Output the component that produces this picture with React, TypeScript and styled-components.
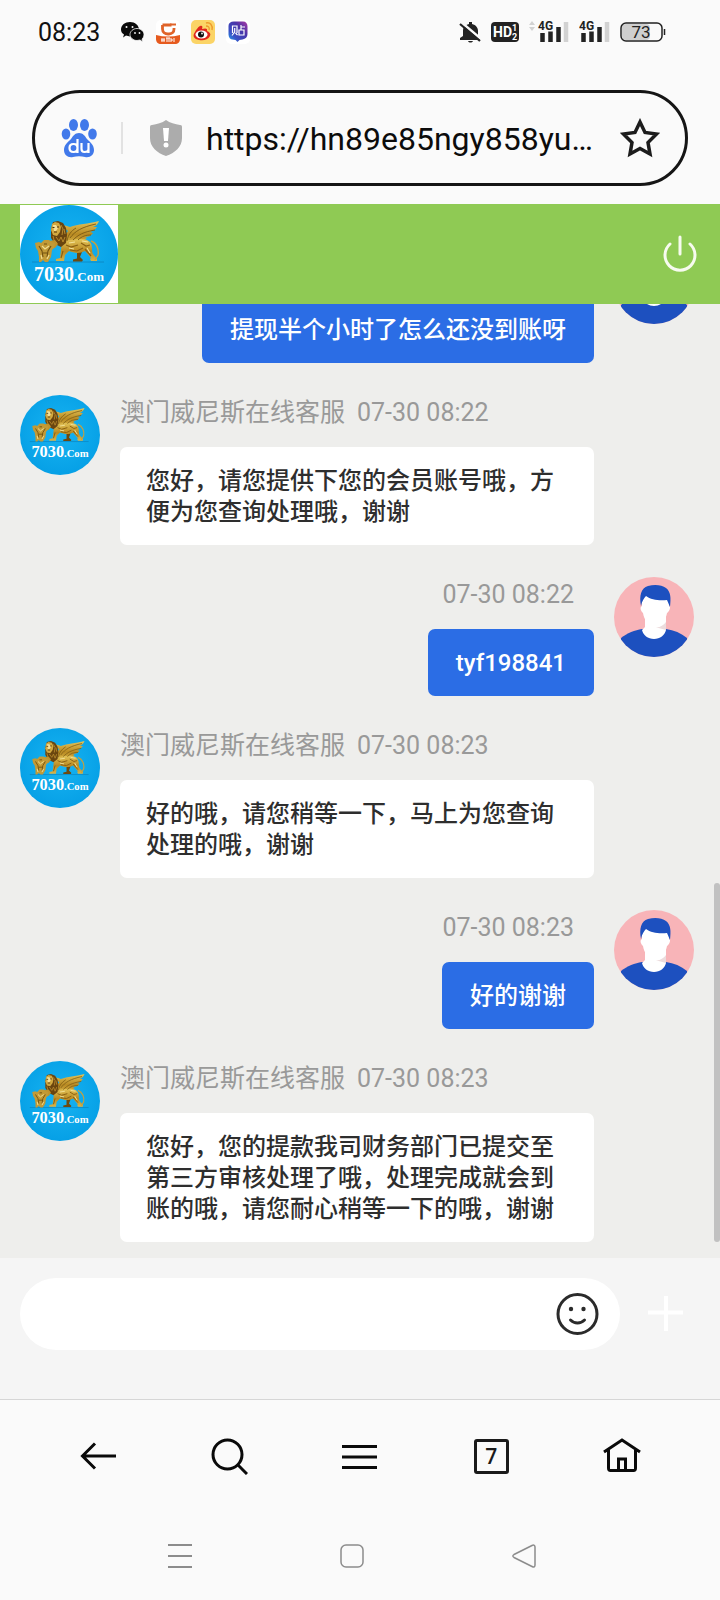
import React from "react";
import styled, { createGlobalStyle } from "styled-components";

const GlobalStyle = createGlobalStyle`
  *, *::before, *::after { box-sizing: border-box; }
  html, body, #root { height: 100%; }
  body {
    margin: 0;
    background: #fafafa;
    font-family: Roboto, "Noto Sans CJK SC", sans-serif;
  }
  button, input { font: inherit; }
  svg { display: block; flex: none; }
`;

const Screen = styled.div`
  display: flex;
  flex-direction: column;
  height: 100vh;
  background: #fafafa;
`;

const StatusBar = styled.div`
  display: flex;
  flex: none;
  align-items: center;
  justify-content: space-between;
  height: 64px;
  padding: 0 54px 0 38px;
`;

const StatusGroup = styled.div<{ $gap: number }>`
  display: flex;
  align-items: center;
  gap: ${(p) => p.$gap}px;
`;

const Clock = styled.time`
  margin-right: 10px;
  padding-top: 2px;
  font-size: 25px;
  line-height: 32px;
  color: #111;
`;

const AddressBar = styled.div`
  display: flex;
  flex: none;
  align-items: center;
  height: 96px;
  margin: 26px 32px 18px;
  padding: 0 25px 0 26px;
  border: 3px solid #151515;
  border-radius: 48px;
`;

const Divider = styled.span`
  width: 2px;
  height: 32px;
  margin: 0 26px 0 24px;
  background: #e2e2e2;
`;

const AddressInput = styled.input`
  flex: 1;
  min-width: 0;
  margin: 0 20px 0 23px;
  padding: 2px 0 0;
  border: 0;
  outline: 0;
  background: none;
  color: #0c0c0c;
  font-size: 32px;
  line-height: 40px;
  text-overflow: ellipsis;
`;

const IconButton = styled.button`
  display: flex;
  flex: none;
  align-items: center;
  justify-content: center;
  padding: 0;
  border: 0;
  background: none;
  color: inherit;
  cursor: pointer;
`;

const Header = styled.header`
  display: flex;
  flex: none;
  align-items: center;
  justify-content: space-between;
  height: 100px;
  padding: 0 20px;
  background: #8fca54;
`;

const LogoPlate = styled.div`
  background: #fff;
`;

const Chat = styled.main`
  position: relative;
  display: flex;
  flex: 1;
  flex-direction: column;
  justify-content: flex-end;
  min-height: 0;
  overflow: hidden;
  background: #eeeeec;
`;

const MessageList = styled.ol`
  display: flex;
  flex: none;
  flex-direction: column;
  gap: 32px;
  margin: 0;
  padding: 0 26px 16px 20px;
  list-style: none;
`;

const MessageRow = styled.li<{ $mine: boolean }>`
  display: flex;
  flex-direction: ${(p) => (p.$mine ? "row-reverse" : "row")};
  align-items: flex-start;
  gap: 20px;
  padding: ${(p) => (p.$mine ? "0 0 0 100px" : "0 100px 0 0")};
`;

const MessageBody = styled.div<{ $mine: boolean }>`
  display: flex;
  flex: 1;
  flex-direction: column;
  align-items: ${(p) => (p.$mine ? "flex-end" : "flex-start")};
  min-width: 0;
`;

const Meta = styled.div<{ $mine: boolean }>`
  display: flex;
  gap: 12px;
  min-height: 36px;
  margin-bottom: 16px;
  padding-right: ${(p) => (p.$mine ? "20px" : "0")};
  color: #999;
  font-size: 25px;
  line-height: 36px;
  white-space: nowrap;
`;

const Bubble = styled.p<{ $mine: boolean }>`
  margin: 0;
  padding: ${(p) => (p.$mine ? "19px 28px 17px" : "19px 26px 17px")};
  border-radius: 7px;
  background: ${(p) => (p.$mine ? "#2b6de5" : "#fff")};
  color: ${(p) => (p.$mine ? "#fff" : "#2e2e2e")};
  font-size: 24px;
  font-weight: 500;
  line-height: 31px;
`;

const ScrollThumb = styled.div`
  position: absolute;
  right: 0;
  bottom: 16px;
  width: 6px;
  height: 359px;
  border-radius: 3px;
  background: #c1c1c1;
`;

const Composer = styled.form`
  display: flex;
  flex: none;
  align-items: center;
  gap: 27px;
  padding: 20px 36px 49px 20px;
  border-bottom: 1px solid #d6d6d6;
  background: #f5f5f5;
`;

const MessageField = styled.div`
  display: flex;
  flex: 1;
  align-items: center;
  height: 72px;
  padding: 0 20px 0 28px;
  border-radius: 36px;
  background: #fff;
`;

const MessageInput = styled.input`
  flex: 1;
  min-width: 0;
  height: 100%;
  padding: 0;
  border: 0;
  outline: 0;
  background: none;
  color: #2e2e2e;
  font-size: 24px;
`;

const BrowserBar = styled.nav`
  display: flex;
  flex: none;
  height: 112px;
  padding: 0 32px;
  color: #0a0a0a;
`;

const SystemBar = styled.nav`
  display: flex;
  flex: none;
  height: 88px;
  padding: 0 110px 0 94px;
  color: #8c8c8c;
`;

const BarButton = styled(IconButton)`
  flex: 1;
`;

const TabCount = styled.span`
  display: flex;
  align-items: center;
  justify-content: center;
  width: 35px;
  height: 35px;
  border: 3px solid #1a1a1a;
  border-radius: 3px;
  color: #1a1a1a;
  font-family: "Open Sans", sans-serif;
  font-size: 21px;
  font-weight: 600;
  line-height: 28px;
`;

function LionLogo({ size }: { size: number }) {
  return (
    <svg width={size} height={size} viewBox="0 0 98 98" role="img" aria-label="7030.Com">
      <defs>
        <radialGradient id={`sky${size}`} cx="50%" cy="45%" r="55%">
          <stop offset="0" stopColor="#18b4f2" />
          <stop offset="1" stopColor="#06a0e6" />
        </radialGradient>
        <linearGradient id={`gold${size}`} x1="0" y1="0" x2="0" y2="1">
          <stop offset="0" stopColor="#e3c458" />
          <stop offset="0.55" stopColor="#b98a22" />
          <stop offset="1" stopColor="#d9b549" />
        </linearGradient>
      </defs>
      <circle cx="49" cy="49" r="49" fill={`url(#sky${size})`} />
      <path d="M12 57h72" stroke="#0b84bf" strokeWidth="0.8" />
      <path d="M57 46l5 1-2 5 3 3-1 1.500h-9l0-2 4-1z" fill="#6d4a10" />
      <g fill={`url(#gold${size})`}>
        <path d="M44 35c1-3 2-7 4-9l-6-5c2-1 5 0 8 1 8-3 18-3 29-6-1 3-3 5-6 6l4 0c-2 3-4 4-7 5l3 1c-2 3-5 4-8 4l2 1c-3 3-7 3-10 3-3 0-5 2-8 4z" />
        <path d="M42 35c6 1 12-1 18-1 8 0 12 3 12 9 0 3 0 4 1 6l4 5 0 2h-6l-1-2 1-1-6-7c-6 3-11 2-16 0l-4 4-1 6h-8l0-2 4-1 1-8z" />
      </g>
      <path d="M71 36c6 2 8 9 7 14l-3 5" fill="none" stroke="#c9a03a" strokeWidth="1.400" />
      <path d="M33 17l5-1 5 2 3 5 1 7-1 8-5 4-6-3-4-6 0-9z" fill="#6a450f" />
      <path d="M32 19l3-2 4 1 2 4-1 5-3 4-4-1-2-5z" fill="#d2a940" />
      <path d="M33 20l3 0 2 3-2 3-2 0z" fill="#f3e09a" />
      <path d="M32.500 22.500h2M37 22h2M34 27h3" stroke="#4b300a" strokeWidth="1" />
      <path d="M41 20l2 4-1 6M36 32l3 4 2-4 2 5 2-5M44 24l1 5M33 31l1 4 3 3" fill="none" stroke="#b98a2c" strokeWidth="1" />
      <path d="M29 36l6-1 3 4-3 4-5-1z" fill="#c0932c" />
      <path d="M15 38l4-1 2 1 3-3 5 0 3 2 3 1-1 5-2 2-1 7-3 5h-3l-2-2-2 2-2 0 0-5-1-6-2-3z" fill="#c29a36" />
      <path d="M50 33c5-7 12-11 26-14M53 35c5-5 10-8 22-10M58 35c4-4 8-5 13-5M47 36c1-6 4-10 9-13" stroke="#7b5a14" strokeWidth="0.900" fill="none" />
      <path d="M46 40l5 2 7-2M61 38l5 3 4-1M50 45l7 1 6-3M65 44l6 7M43 46l-2 7" stroke="#8a6012" strokeWidth="1.200" fill="none" />
      <path d="M49 38l6-1M62 36l6 1M49 43l5 1M67 43l3 5" stroke="#f4e39a" strokeWidth="1.100" fill="none" />
      <path d="M19 41l3 5 1 6M31 41l-3 5-1 6M24 39l3 0M23 48h5" stroke="#71500f" strokeWidth="1.100" fill="none" />
      <path d="M22 41l3 3 4-3M21 50l1 4M29 50l-2 4" stroke="#f0dc90" strokeWidth="1.200" fill="none" />
      <text x="14" y="76" fill="#fff" fontFamily="Liberation Serif, serif" fontWeight="700" fontSize="20">
        7030<tspan fontSize="13">.Com</tspan>
      </text>
    </svg>
  );
}

function UserAvatar() {
  return (
    <svg width="80" height="80" viewBox="0 0 80 80" role="img" aria-label="用户">
      <clipPath id="userClip"><circle cx="40" cy="40" r="40" /></clipPath>
      <g clipPath="url(#userClip)">
        <path d="M0 0h80v80H0z" fill="#f8b4b8" />
        <path d="M7 61c6-5 14-8 21-9l24 0c8 1 15 4 21 9v19H7z" fill="#1d50bf" />
        <path d="M31 40h21v13c-1 5-6 9-12 9s-11-4-12-9l3-3z" fill="#fff" />
        <path d="M52 45c-3 4-7 6-11 5l11 3z" fill="#ecdcdd" />
        <path d="M28 18h27l0 11c2 0 1 5-2 7-1 6-5 12-12 13-7-1-11-6-12-13-3-3-3-6-1-7z" fill="#fff" />
        <path d="M27 29c-2-10 0-18 7-20 7-2 14-1 18 2 5 4 5 10 4 19l-3-7c-7 1-16 0-21-4-2 2-4 5-5 10z" fill="#1d50bf" />
      </g>
    </svg>
  );
}

function WeChatIcon() {
  return (
    <svg width="24" height="24" viewBox="0 0 24 24" aria-hidden="true">
      <path d="M9 2C4 2 0 5 0 9.500c0 2 1 4 3 5l-1 3 3-2 4 1c5 0 9-3 9-7S14 2 9 2z" fill="#0a0a0a" />
      <path d="M16 8.500c-4 0-7 3-7 6s3 6 7 6l3-.5 3 2-1-3c1-1 2-2 2-4.500 0-3-3-6-7-6z" fill="#0a0a0a" stroke="#fafafa" strokeWidth="0.800" />
      <g fill="#fafafa"><circle cx="5.500" cy="7" r="1" /><circle cx="11.500" cy="7" r="1" /><circle cx="14" cy="13" r="0.900" /><circle cx="18.500" cy="13" r="0.900" /></g>
    </svg>
  );
}

function DeliveryIcon() {
  return (
    <svg width="24" height="24" viewBox="0 0 24 24" aria-hidden="true">
      <rect width="24" height="24" rx="5" fill="#fff" />
      <path d="M6.500 5h9M18 8v1c0 3-2 5-5 5h-1c-3 0-5.500-2-5.500-5V5" fill="none" stroke="#e0642a" strokeWidth="2.800" />
      <path d="M14 4.500h6" fill="none" stroke="#e0642a" strokeWidth="2" />
      <path d="M0 15c8 2 16 2 24 0v4c0 3-2 5-5 5H5c-3 0-5-2-5-5z" fill="#e65a1e" />
      <path d="M6 18v4M8 18v4M11 18v4M13 18v4M15 18v4M18 18v4M5 20h4M10 18h4M15 20h2" stroke="#fff" strokeWidth="1" />
    </svg>
  );
}

function WeiboIcon() {
  return (
    <svg width="24" height="24" viewBox="0 0 24 24" aria-hidden="true">
      <rect width="24" height="24" rx="5" fill="#fbd466" />
      <path d="M9 6c2-1 3 0 2 3 3-1 6-1 5 2 3 1 4 3 3 5-2 4-7 5-11 4-5-1-7-4-4-8 1-2 3-5 5-6z" fill="#e0261c" />
      <ellipse cx="10.500" cy="14.500" rx="6" ry="4" fill="#fff" />
      <circle cx="10" cy="14.500" r="3" fill="#111" />
      <circle cx="11" cy="13.500" r="0.900" fill="#fff" />
      <path d="M15 3c4-1 7 2 6 7M15 6c2 0 4 1 3 4" fill="none" stroke="#ee9a2b" strokeWidth="1.400" />
    </svg>
  );
}

function TiebaIcon() {
  return (
    <svg width="24" height="24" viewBox="0 0 24 24" aria-hidden="true">
      <defs>
        <linearGradient id="tieba" x1="1" y1="0" x2="0" y2="1">
          <stop offset="0" stopColor="#b03aa6" />
          <stop offset="0.350" stopColor="#4a35a8" />
          <stop offset="0.700" stopColor="#3a4fc4" />
          <stop offset="1" stopColor="#23a6ef" />
        </linearGradient>
      </defs>
      <rect width="24" height="24" rx="5" fill="#fff" />
      <path d="M8 1.500h9c3 0 4.500 2 4.500 5V14c0 3-2 5-5 5.500l-3 .5-2 2-2-2-3-.500c-2 0-4-2-4-5V6c0-3 2-4.500 5.500-4.500z" fill="url(#tieba)" />
      <path d="M6.500 13V6h4.500v7M8.700 8v4L6 15.500M9.500 13l2 2M15 5v5M15 7h4M13 10h5v5h-5z" fill="none" stroke="#fff" strokeWidth="1.200" />
    </svg>
  );
}

function BellOffIcon() {
  return (
    <svg width="22" height="24" viewBox="0 0 22 24" aria-hidden="true">
      <path d="M10 2h3v2c4 1 6 4 6 7v5l2 2v2H1v-2l3-2v-5c0-4 2-6 6-7zM9 21h5c-1 2-4 2-5 0z" fill="#222" />
      <path d="M2 2l20 17" stroke="#fafafa" strokeWidth="2.500" />
      <path d="M1 4l20 17" stroke="#222" strokeWidth="2.200" />
    </svg>
  );
}

function HdBadge() {
  return (
    <svg width="28" height="20" viewBox="0 0 28 20" aria-label="HD 1 2">
      <rect width="28" height="20" rx="4" fill="#222" />
      <text x="2" y="15" fontFamily="Roboto, sans-serif" fontWeight="700" fontSize="14" fill="#fff">HD</text>
      <text x="21" y="9" fontFamily="Roboto, sans-serif" fontWeight="700" fontSize="9" fill="#fff">1</text>
      <text x="21" y="18" fontFamily="Roboto, sans-serif" fontWeight="700" fontSize="9" fill="#fff">2</text>
    </svg>
  );
}

function SignalIcon({ traffic }: { traffic?: boolean }) {
  return (
    <svg width={traffic ? 40 : 31} height="24" viewBox={traffic ? "-9 0 40 24" : "0 0 31 24"} aria-label="4G">
      {traffic && <path d="M-9 5l3-4 3 4zM-9 7l3 4 3-4z" fill="#d2d2d2" />}
      <text x="0" y="10" fontFamily="Roboto, sans-serif" fontWeight="700" fontSize="12" fill="#222">4G</text>
      <path d="M4.500 13v9M12.500 11.500v10.500M20.500 7v15" stroke="#222" strokeWidth="4.500" />
      <path d="M28 2v20" stroke="#d2d2d2" strokeWidth="4.500" />
    </svg>
  );
}

function BatteryIcon() {
  return (
    <svg width="46" height="20" viewBox="0 0 46 20" aria-label="73%">
      <rect x="2" y="2" width="28" height="16" rx="4" fill="#cfcfcf" />
      <rect x="1" y="1" width="41" height="18" rx="5" fill="none" stroke="#222" strokeWidth="1.500" />
      <path d="M44.500 7v6" stroke="#222" strokeWidth="1.500" />
      <text x="21" y="16" textAnchor="middle" fontFamily="Roboto, sans-serif" fontSize="17" fill="#222">73</text>
    </svg>
  );
}

function PawIcon() {
  return (
    <svg width="36" height="40" viewBox="0 0 36 40" aria-hidden="true">
      <g fill="#4179ea">
        <ellipse cx="12.500" cy="7" rx="4.500" ry="6" />
        <ellipse cx="23.500" cy="7" rx="4.500" ry="6" />
        <ellipse cx="5" cy="16" rx="4.300" ry="5.500" />
        <ellipse cx="31.500" cy="16" rx="4.300" ry="5.500" />
        <path d="M18 15c4 0 6 3 8 6 3 3 7 6 7 11 0 5-4 8-9 7-4-1-8-1-12 0-5 1-9-2-9-7s4-8 7-11c2-3 4-6 8-6z" />
      </g>
      <path d="M16.500 21v14M16.500 30c0-3-2-4-4-4s-4 1-4 4 2 4 4 4 4-1 4-4M20.500 25v6c0 2 1 3 3 3s4-1 4-3v-6M27.500 25v10" fill="none" stroke="#fff" strokeWidth="2.200" />
    </svg>
  );
}

function ShieldIcon() {
  return (
    <svg width="34" height="38" viewBox="0 0 34 38" aria-hidden="true">
      <path d="M17 1c4 3 9 4 14 5 2 0 2 1 2 3v10c0 9-7 15-16 18C8 34 1 28 1 19V9c0-2 0-3 2-3 5-1 10-2 14-5z" fill="#acacac" />
      <path d="M14 9h6l-1 13h-4z" fill="#fff" />
      <circle cx="17" cy="26" r="2.500" fill="#fff" />
    </svg>
  );
}

function StarIcon() {
  return (
    <svg width="40" height="40" viewBox="0 0 40 40" fill="none" stroke="#1c1c1c" strokeWidth="3.500" aria-hidden="true">
      <path d="M20 4l5 10.500 11.500 1.500-8.500 8.500 2 11.500L20 30.500 10 36l2-11.500L3.500 16 15 14.500z" />
    </svg>
  );
}

function PowerIcon() {
  return (
    <svg width="40" height="40" viewBox="0 0 40 40" fill="none" stroke="#f7fbef" strokeWidth="3" strokeLinecap="round" aria-hidden="true">
      <path d="M20 3v17M10 10a15 15 0 1 0 20 0" />
    </svg>
  );
}

function SmileIcon() {
  return (
    <svg width="44" height="44" viewBox="0 0 44 44" fill="none" stroke="#2b2b2b" strokeWidth="3" strokeLinecap="round" aria-hidden="true">
      <circle cx="21.500" cy="22" r="19.500" />
      <path d="M14.500 28c4 4 10 4 14 0" />
      <circle cx="15" cy="17" r="2.200" fill="#2b2b2b" stroke="none" />
      <circle cx="27.500" cy="17" r="2.200" fill="#2b2b2b" stroke="none" />
    </svg>
  );
}

type Message = { id: number; mine: boolean; time?: string; text: string };

const AGENT_NAME = "澳门威尼斯在线客服";

const messages: Message[] = [
  { id: 1, mine: true, text: "提现半个小时了怎么还没到账呀" },
  { id: 2, mine: false, time: "07-30 08:22", text: "您好，请您提供下您的会员账号哦，方便为您查询处理哦，谢谢" },
  { id: 3, mine: true, time: "07-30 08:22", text: "tyf198841" },
  { id: 4, mine: false, time: "07-30 08:23", text: "好的哦，请您稍等一下，马上为您查询处理的哦，谢谢" },
  { id: 5, mine: true, time: "07-30 08:23", text: "好的谢谢" },
  { id: 6, mine: false, time: "07-30 08:23", text: "您好，您的提款我司财务部门已提交至第三方审核处理了哦，处理完成就会到账的哦，请您耐心稍等一下的哦，谢谢" },
];

function ChatMessage({ message }: { message: Message }) {
  const { mine, time, text } = message;
  return (
    <MessageRow $mine={mine}>
      {mine ? <UserAvatar /> : <LionLogo size={80} />}
      <MessageBody $mine={mine}>
        <Meta $mine={mine}>
          {!mine && <span>{AGENT_NAME}</span>}
          {time && <time>{time}</time>}
        </Meta>
        <Bubble $mine={mine}>{text}</Bubble>
      </MessageBody>
    </MessageRow>
  );
}

export default function App() {
  return (
    <>
      <GlobalStyle />
      <Screen>
        <StatusBar>
          <StatusGroup $gap={11}>
            <Clock>08:23</Clock>
            <WeChatIcon />
            <DeliveryIcon />
            <WeiboIcon />
            <TiebaIcon />
          </StatusGroup>
          <StatusGroup $gap={10}>
            <BellOffIcon />
            <HdBadge />
            <SignalIcon traffic />
            <SignalIcon />
            <BatteryIcon />
          </StatusGroup>
        </StatusBar>

        <AddressBar>
          <PawIcon />
          <Divider />
          <ShieldIcon />
          <AddressInput type="text" aria-label="网址" defaultValue="https://hn89e85ngy858yu…" />
          <IconButton type="button" aria-label="收藏"><StarIcon /></IconButton>
        </AddressBar>

        <Header>
          <LogoPlate><LionLogo size={98} /></LogoPlate>
          <IconButton type="button" aria-label="退出"><PowerIcon /></IconButton>
        </Header>

        <Chat>
          <MessageList>
            {messages.map((m) => <ChatMessage key={m.id} message={m} />)}
          </MessageList>
          <ScrollThumb />
        </Chat>

        <Composer onSubmit={(e) => e.preventDefault()}>
          <MessageField>
            <MessageInput type="text" aria-label="消息" />
            <IconButton type="button" aria-label="表情"><SmileIcon /></IconButton>
          </MessageField>
          <IconButton type="button" aria-label="更多">
            <svg width="37" height="37" viewBox="0 0 37 37" stroke="#fff" strokeWidth="4" aria-hidden="true">
              <path d="M19 0v35M1 16.500h35" />
            </svg>
          </IconButton>
        </Composer>

        <BrowserBar aria-label="浏览器">
          <BarButton type="button" aria-label="返回">
            <svg width="36" height="36" viewBox="0 0 36 36" fill="none" stroke="currentColor" strokeWidth="3" aria-hidden="true">
              <path d="M36 18H3M15 5.500L2.500 18 15 30.500" />
            </svg>
          </BarButton>
          <BarButton type="button" aria-label="搜索">
            <svg width="38" height="38" viewBox="0 0 38 38" fill="none" stroke="currentColor" strokeWidth="3" aria-hidden="true">
              <circle cx="17.500" cy="17.500" r="14.500" />
              <path d="M28 28l9 9" />
            </svg>
          </BarButton>
          <BarButton type="button" aria-label="菜单">
            <svg width="36" height="36" viewBox="0 0 36 36" fill="none" stroke="currentColor" strokeWidth="3" aria-hidden="true">
              <path d="M0 8.500h35M0 19h35M0 29.500h35" />
            </svg>
          </BarButton>
          <BarButton type="button" aria-label="标签页">
            <TabCount>7</TabCount>
          </BarButton>
          <BarButton type="button" aria-label="主页">
            <svg width="38" height="38" viewBox="0 0 38 38" fill="none" stroke="currentColor" strokeWidth="3" aria-hidden="true">
              <path d="M1 15L19 3l18 12M5.500 13v18c0 2 0 2.500 2 2.500h23c2 0 2-.5 2-2.500V13M15.500 33V22h7v11" />
            </svg>
          </BarButton>
        </BrowserBar>

        <SystemBar aria-label="系统">
          <BarButton type="button" aria-label="最近任务">
            <svg width="24" height="24" viewBox="0 0 24 24" fill="none" stroke="currentColor" strokeWidth="2" aria-hidden="true">
              <path d="M0 1h24M0 12h24M0 23h24" />
            </svg>
          </BarButton>
          <BarButton type="button" aria-label="主屏幕">
            <svg width="24" height="24" viewBox="0 0 24 24" fill="none" stroke="currentColor" strokeWidth="1.500" aria-hidden="true">
              <rect x="1" y="1" width="22" height="22" rx="5" />
            </svg>
          </BarButton>
          <BarButton type="button" aria-label="系统返回">
            <svg width="24" height="24" viewBox="0 0 24 24" fill="none" stroke="currentColor" strokeWidth="1.500" strokeLinejoin="round" aria-hidden="true">
              <path d="M2 10.500L20 1.500c2-1 3 0 3 1.500v18c0 2-1 2.500-3 1.500L2 13.500c-1.500-1-1.500-2 0-3z" />
            </svg>
          </BarButton>
        </SystemBar>
      </Screen>
    </>
  );
}
